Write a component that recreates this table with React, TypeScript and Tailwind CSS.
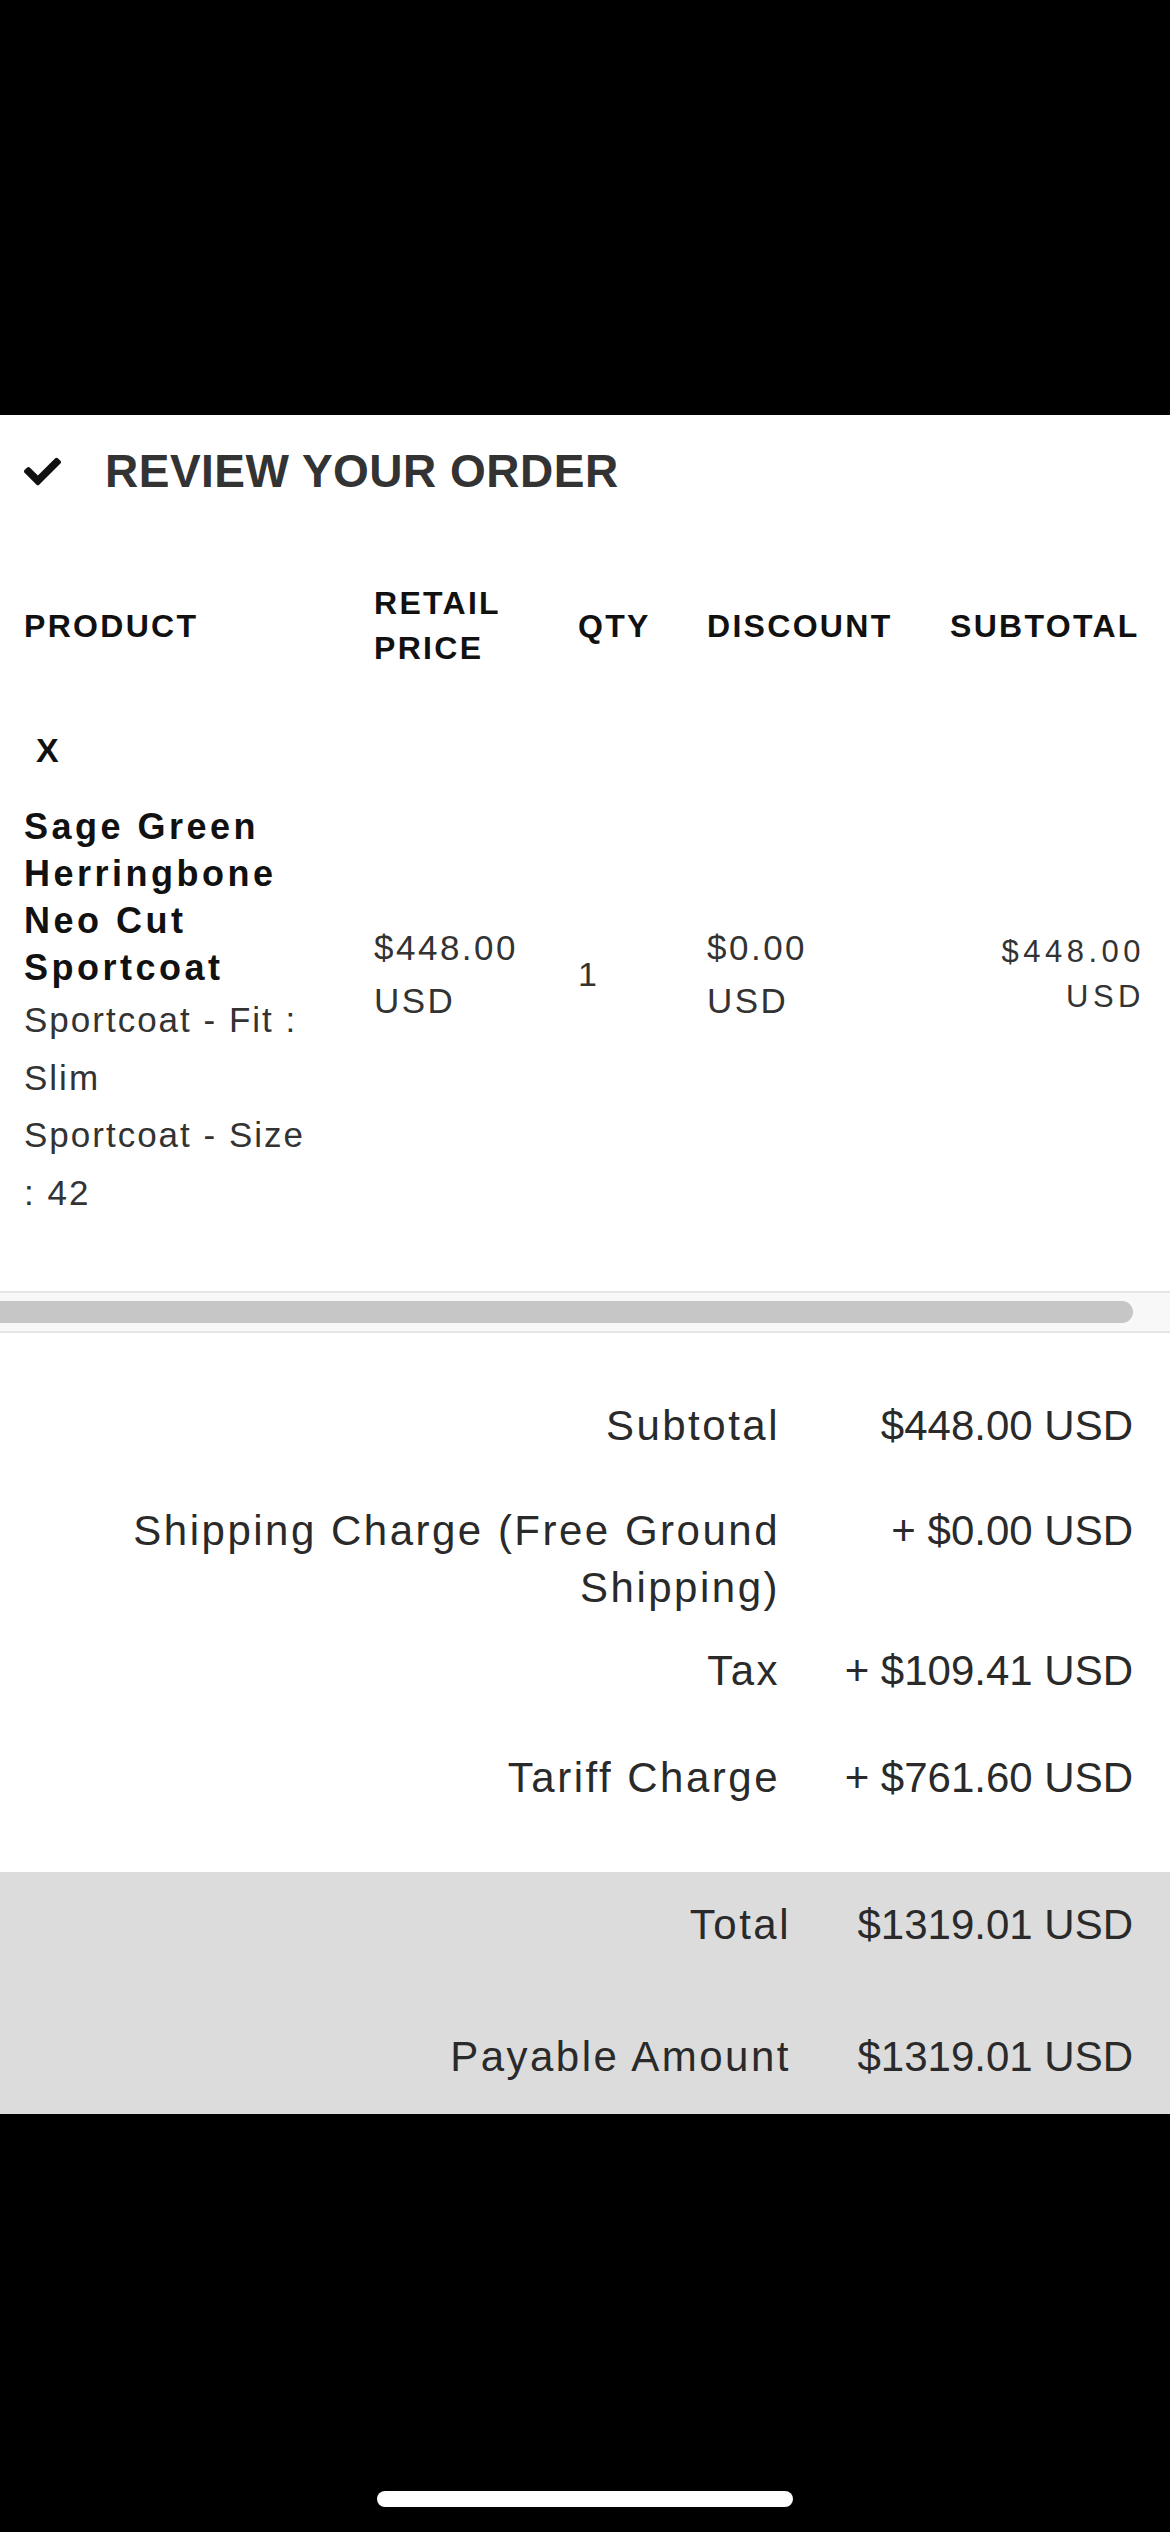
import { FaCheck } from "react-icons/fa";

function SummaryRow({
  label,
  value,
  valueWidth,
  className = "",
}: {
  label: string;
  value: string;
  valueWidth: "w-[353px]" | "w-[342px]";
  className?: string;
}) {
  return (
    <div className={`flex justify-end ${className}`}>
      <div className="w-[680px] text-right tracking-[2.5px]">{label}</div>
      <div className={`${valueWidth} shrink-0 text-right tracking-[0px]`}>{value}</div>
    </div>
  );
}

export default function App() {
  return (
    <div className="w-[1170px] min-h-[2532px] bg-black font-['Liberation_Sans',Arial,sans-serif]">
      <div className="h-[415px] bg-black" />

      <main className="bg-white">
        {/* Heading */}
        <div className="flex h-[112px] items-center pl-[24px]">
          <FaCheck className="h-[37px] w-[37px] text-[#111]" />
          <h2 className="ml-[44px] text-[46px] font-bold leading-none tracking-[0.5px] text-[#333]">
            REVIEW YOUR ORDER
          </h2>
        </div>

        {/* Table header */}
        <div className="grid h-[198px] grid-cols-[350px_204px_129px_243px_244px] items-center text-[32px] font-bold leading-[45px] tracking-[2.3px] text-[#111]">
          <div className="pl-[24px]">PRODUCT</div>
          <div className="pl-[24px] pr-[20px]">RETAIL PRICE</div>
          <div className="pl-[24px]">QTY</div>
          <div className="pl-[24px]">DISCOUNT</div>
          <div className="pl-[24px]">SUBTOTAL</div>
        </div>

        {/* Table body */}
        <div className="grid grid-cols-[350px_204px_129px_243px_244px] items-center pt-[2px] pb-[70px]">
          <div className="pl-[24px] pr-[26px]">
            <div className="mb-[30px] pl-[12px] text-[34px] font-bold leading-[46px] text-[#111]">X</div>
            <div className="text-[36px] font-bold leading-[47px] tracking-[3.5px] text-[#111]">
              Sage Green Herringbone Neo Cut Sportcoat
            </div>
            <div className="text-[35px] leading-[57.5px] tracking-[2px] text-[#333]">
              <div>
                Sportcoat - Fit :<br />
                Slim
              </div>
              <div>
                Sportcoat - Size
                <br />: 42
              </div>
            </div>
          </div>
          <div className="pl-[24px] text-[35px] leading-[53px] tracking-[2.5px] text-[#333]">
            <div>$448.00</div>
            <div>USD</div>
          </div>
          <div className="pl-[24px] text-[34px] leading-[53px] text-[#333]">1</div>
          <div className="pl-[24px] text-[35px] leading-[53px] tracking-[2.5px] text-[#333]">
            <div>$0.00</div>
            <div>USD</div>
          </div>
          <div className="pr-[25px] text-right text-[31px] leading-[45px] tracking-[4.5px] text-[#333]">
            <div>$448.00</div>
            <div>USD</div>
          </div>
        </div>

        {/* Horizontal scrollbar */}
        <div className="h-[42px] border-y-2 border-[#e6e6e6] bg-[#f8f8f8] pt-[8px]">
          <div className="h-[22px] w-[1133px] rounded-r-full bg-[#c6c6c6]" />
        </div>

        {/* Summary */}
        <div className="pt-[64px] pb-[66px] pr-[37px] text-[42px] leading-[57px] text-[#2a2a2a]">
          <SummaryRow label="Subtotal" value="$448.00 USD" valueWidth="w-[353px]" />
          <SummaryRow
            className="mt-[48px]"
            label="Shipping Charge (Free Ground Shipping)"
            value="+ $0.00 USD"
            valueWidth="w-[353px]"
          />
          <SummaryRow className="mt-[26px]" label="Tax" value="+ $109.41 USD" valueWidth="w-[353px]" />
          <SummaryRow className="mt-[50px]" label="Tariff Charge" value="+ $761.60 USD" valueWidth="w-[353px]" />
        </div>

        <div className="bg-[#dcdcdc] pt-[23.5px] pb-[29.5px] pr-[37px] text-[42px] leading-[57px] text-[#2a2a2a]">
          <SummaryRow label="Total" value="$1319.01 USD" valueWidth="w-[342px]" />
          <SummaryRow className="mt-[75px]" label="Payable Amount" value="$1319.01 USD" valueWidth="w-[342px]" />
        </div>
      </main>

      <div className="flex h-[418px] items-end justify-center bg-black pb-[25px]">
        <div className="h-[16px] w-[416px] rounded-full bg-white" />
      </div>
    </div>
  );
}
